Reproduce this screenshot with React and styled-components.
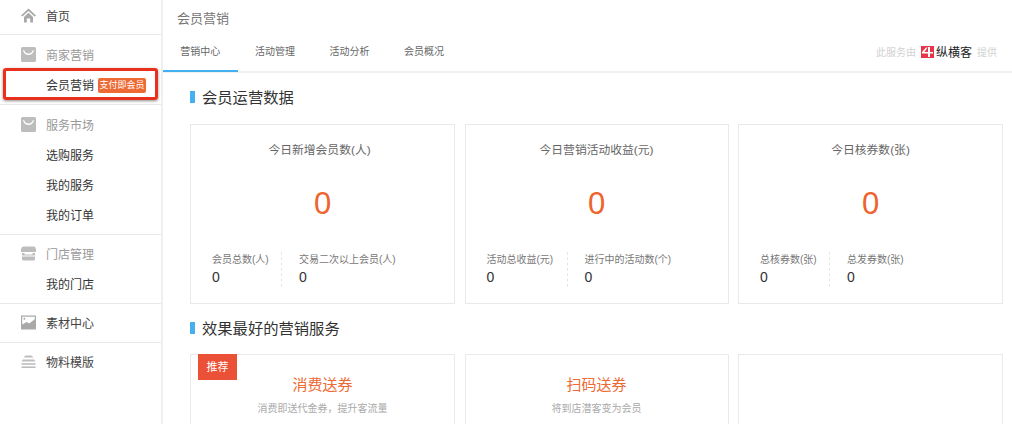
import React from 'react';
import styled, { createGlobalStyle } from 'styled-components';

const GlobalStyle = createGlobalStyle`
  html, body {
    margin: 0;
    height: 100%;
    overflow: hidden;
    background: #fff;
  }
  body {
    font-family: "Liberation Sans", "Noto Sans CJK SC", sans-serif;
    color: #333;
  }
`;

const Page = styled.div`
  display: flex;
  width: 1012px;
  height: 424px;
  overflow: hidden;
`;

const Sidebar = styled.nav`
  flex: none;
  width: 161px;
  border-right: 2px solid #efefef;
`;

const Group = styled.div`
  padding: ${p => p.$top}px 0 ${p => (p.$bottom === undefined ? 4 : p.$bottom)}px;
  border-bottom: ${p => (p.$last ? 'none' : '1px solid #e8e8e8')};
`;

const Row = styled.div`
  position: relative;
  box-sizing: border-box;
  display: flex;
  align-items: center;
  height: ${p => p.$h || 30}px;
  padding: 0 0 2px 46px;
  font-size: 12px;
  color: #333;
`;

const HeadRow = styled(Row)`
  padding-left: 21px;
  gap: 10px;
  color: ${p => (p.$muted ? '#999' : '#444')};
`;

const Marked = styled(Row)`
  &::after {
    content: '';
    position: absolute;
    left: 3px;
    top: -2px;
    width: 149px;
    height: 26px;
    border: 3px solid #e8301c;
    border-radius: 3px;
    box-shadow: 0 1px 3px rgba(0, 0, 0, 0.45);
  }
`;

const Tag = styled.span`
  margin: 2px 0 0 4px;
  padding: 0 1.5px;
  height: 15px;
  line-height: 15px;
  border-radius: 2px;
  background: #ee6a35;
  color: #fff;
  font-size: 9px;
  white-space: nowrap;
`;

const Main = styled.main`
  flex: 1;
  min-width: 0;
`;

const Header = styled.header`
  height: 71px;
  border-bottom: 2px solid #f1f1f1;
  box-sizing: content-box;
`;

const PageTitle = styled.div`
  padding: 10px 0 0 14px;
  height: 27px;
  line-height: 18px;
  font-size: 13px;
  color: #777;
`;

const TabBar = styled.div`
  display: flex;
  align-items: stretch;
  height: 34px;
`;

const Tab = styled.div`
  width: 74.6px;
  height: 35px;
  line-height: 30px;
  text-align: center;
  font-size: 10px;
  color: #666;
  border-bottom: 2px solid ${p => (p.$active ? '#45b0f0' : 'transparent')};
  box-sizing: border-box;
`;

const Provider = styled.div`
  margin-left: auto;
  padding-right: 15px;
  display: flex;
  align-items: center;
  gap: 4px;
  height: 29px;
  font-size: 10px;
  color: #d2d2d2;
`;

const ProviderName = styled.span`
  margin: 0 1px 0 -2px;
  font-size: 12px;
  color: #222;
`;

const LogoBox = styled.svg`
  flex: none;
  margin-left: 1px;
`;

const Content = styled.div`
  padding: 12px 9px 0 27px;
`;

const SectionTitle = styled.h3`
  box-sizing: border-box;
  display: flex;
  align-items: center;
  gap: 7px;
  margin: 0;
  height: 24px;
  padding-bottom: 2px;
  font-size: 15.3px;
  font-weight: 400;
  color: #333;

  &::before {
    content: '';
    margin-top: 2px;
    width: 5px;
    height: 12px;
    background: #45b0f0;
  }
`;

const Cards = styled.div`
  display: grid;
  grid-template-columns: 265px 264px 265px;
  column-gap: 9.5px;
  margin-top: ${p => p.$top}px;
  margin-bottom: 12px;
`;

const Card = styled.div`
  position: relative;
  box-sizing: border-box;
  height: 180px;
  border: 1px solid #e9e9e9;
  text-align: center;
`;

const CardTitle = styled.div`
  padding: 16px ${p => p.$nudge || 0}px 0 0;
  line-height: 18px;
  font-size: 11.8px;
  color: #666;
`;

const BigNumber = styled.div`
  margin-top: 23px;
  line-height: 44px;
  font-size: 31px;
  color: #ee632e;
`;

const Stats = styled.div`
  display: flex;
  margin: 26px 0 0 21px;
  text-align: left;
`;

const Stat = styled.div`
  width: ${p => p.$w}px;
  padding-left: ${p => (p.$second ? '17px' : '0')};
  border-left: ${p => (p.$second ? '1px dashed #e6e6e6' : 'none')};
  box-sizing: border-box;
  white-space: nowrap;
`;

const StatLabel = styled.div`
  line-height: 15px;
  font-size: 10px;
  color: #777;
`;

const StatValue = styled.div`
  line-height: 20px;
  font-size: 14px;
  color: #333;
`;

const ServiceName = styled.div`
  padding-top: 19px;
  line-height: 22px;
  font-size: 15px;
  color: #ee6a35;
`;

const ServiceNote = styled.div`
  margin-top: 6px;
  line-height: 14px;
  font-size: 10px;
  color: #aaa;
`;

const Badge = styled.div`
  position: absolute;
  left: 7px;
  top: -1px;
  width: 39px;
  height: 26px;
  line-height: 26px;
  background: #ea5136;
  color: #fff;
  font-size: 11px;
`;

const Icon = styled.svg`
  flex: none;
  margin-top: 1px;
  width: 15px;
  height: 15px;
  fill: ${p => p.$fill || '#bdbdbd'};
`;

const HomeIcon = () => (
  <Icon viewBox="0 0 15 15" $fill="#a9a9a9">
    <path d="M7.5 0.5 L15 7.5 L13.6 8.6 L7.5 3 L1.4 8.6 L0 7.5 Z" />
    <path d="M3 9 L7.5 4.8 L12 9 V14.5 H9.2 V10.5 H5.8 V14.5 H3 Z" />
  </Icon>
);

const BagIcon = () => (
  <Icon viewBox="0 0 15 15">
    <path fillRule="evenodd" d="M1.5 0 H13.5 A1.5 1.5 0 0 1 15 1.5 V13.5 A1.5 1.5 0 0 1 13.5 15 H1.5 A1.5 1.5 0 0 1 0 13.5 V1.5 A1.5 1.5 0 0 1 1.5 0 Z M3 3 L2 3.6 C3 6.8 5 8 7.5 8 C10 8 12 6.8 13 3.6 L12 3 C11 5.4 9.6 6.6 7.5 6.6 C5.4 6.6 4 5.4 3 3 Z" />
  </Icon>
);

const ShopIcon = () => (
  <Icon viewBox="0 0 15 15">
    <path d="M2.5 0.5 H12.5 Q14.5 0.5 15 3.5 V6 H0 V3.5 Q0.5 0.5 2.5 0.5 Z" />
    <path d="M1 7 H3.5 V8.6 H11.5 V7 H14 V9.4 H1 Z" />
    <path d="M1 10.4 H14 V13 Q14 14.5 12.5 14.5 H2.5 Q1 14.5 1 13 Z" />
  </Icon>
);

const ImageIcon = () => (
  <Icon viewBox="0 0 15 15" $fill="#a9a9a9">
    <path fillRule="evenodd" d="M0 0.5 H15 V14.5 H0 Z M1.2 1.7 V9.6 L5.6 7 L8.2 8.4 L13.8 4.2 V1.7 Z" />
    <circle cx="3.4" cy="3.8" r="1" />
  </Icon>
);

const LayersIcon = () => (
  <Icon viewBox="0 0 15 15">
    <path d="M4.5 1.5 H10.5 L12.5 3.6 H2.5 Z" />
    <path d="M2 5.4 H13 L14.5 7.4 H0.5 Z" />
    <path d="M0.5 9.2 H14.5 V10.8 H0.5 Z" />
    <path d="M0.5 12.4 H14.5 V14 H0.5 Z" />
  </Icon>
);

const LogoMark = () => (
  <LogoBox width="13" height="12" viewBox="0 0 13 12">
    <rect width="13" height="12" fill="#e8344a" />
    <path d="M7 1 H9 V6 H12 V7.4 H9 V11 H7 V7.4 H1 V6 L5 1.5 H6.6 L3.4 6 H7 Z" fill="#fff" />
  </LogoBox>
);

const overview = [
  {
    title: '今日新增会员数(人)',
    first: '会员总数(人)',
    second: '交易二次以上会员(人)',
    width: 69,
    nudge: 6,
  },
  {
    title: '今日营销活动收益(元)',
    first: '活动总收益(元)',
    second: '进行中的活动数(个)',
    width: 80,
  },
  {
    title: '今日核券数(张)',
    first: '总核券数(张)',
    second: '总发券数(张)',
    width: 69,
  },
];

const services = [
  { name: '消费送券', note: '消费即送代金券，提升客流量', recommended: true },
  { name: '扫码送券', note: '将到店潜客变为会员' },
  {},
];

export default function App() {
  return (
    <Page>
      <GlobalStyle />
      <Sidebar>
        <Group $top={0} $bottom={2}>
          <HeadRow $h={32}>
            <HomeIcon />
            首页
          </HeadRow>
        </Group>
        <Group $top={5}>
          <HeadRow $muted>
            <BagIcon />
            商家营销
          </HeadRow>
          <Marked>
            会员营销
            <Tag>支付即会员</Tag>
          </Marked>
        </Group>
        <Group $top={5}>
          <HeadRow $muted>
            <BagIcon />
            服务市场
          </HeadRow>
          <Row>选购服务</Row>
          <Row>我的服务</Row>
          <Row>我的订单</Row>
        </Group>
        <Group $top={4}>
          <HeadRow $muted>
            <ShopIcon />
            门店管理
          </HeadRow>
          <Row>我的门店</Row>
        </Group>
        <Group $top={4}>
          <HeadRow>
            <ImageIcon />
            素材中心
          </HeadRow>
        </Group>
        <Group $top={4} $last>
          <HeadRow>
            <LayersIcon />
            物料模版
          </HeadRow>
        </Group>
      </Sidebar>
      <Main>
        <Header>
          <PageTitle>会员营销</PageTitle>
          <TabBar>
            <Tab $active>营销中心</Tab>
            <Tab>活动管理</Tab>
            <Tab>活动分析</Tab>
            <Tab>会员概况</Tab>
            <Provider>
              此服务由
              <LogoMark />
              <ProviderName>纵横客</ProviderName>
              提供
            </Provider>
          </TabBar>
        </Header>
        <Content>
          <SectionTitle>会员运营数据</SectionTitle>
          <Cards $top={15}>
            {overview.map(item => (
              <Card key={item.title}>
                <CardTitle $nudge={item.nudge}>{item.title}</CardTitle>
                <BigNumber>0</BigNumber>
                <Stats>
                  <Stat $w={item.width}>
                    <StatLabel>{item.first}</StatLabel>
                    <StatValue>0</StatValue>
                  </Stat>
                  <Stat $second $w={150}>
                    <StatLabel>{item.second}</StatLabel>
                    <StatValue>0</StatValue>
                  </Stat>
                </Stats>
              </Card>
            ))}
          </Cards>
          <SectionTitle>效果最好的营销服务</SectionTitle>
          <Cards $top={14}>
            {services.map((item, i) => (
              <Card key={i}>
                {item.recommended && <Badge>推荐</Badge>}
                <ServiceName>{item.name}</ServiceName>
                <ServiceNote>{item.note}</ServiceNote>
              </Card>
            ))}
          </Cards>
        </Content>
      </Main>
    </Page>
  );
}
